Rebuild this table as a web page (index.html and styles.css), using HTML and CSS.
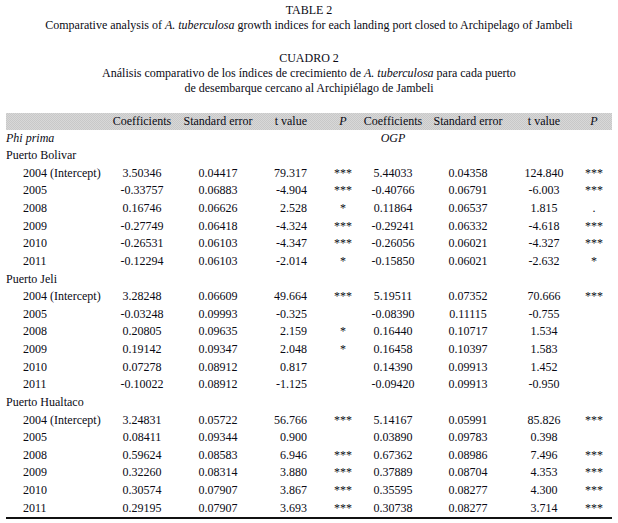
FILE: index.html
```html
<!DOCTYPE html>
<html>
<head>
<meta charset="utf-8">
<link rel="stylesheet" href="styles.css">
</head>
<body>
<div class="titles">
  <div class="title-block">
    <div>TABLE 2</div>
    <div>Comparative analysis of <i>A. tuberculosa</i> growth indices for each landing port closed to Archipelago of Jambeli</div>
  </div>
  <div class="title-block second">
    <div>CUADRO 2</div>
    <div>Análisis comparativo de los índices de crecimiento de <i>A. tuberculosa</i> para cada puerto</div>
    <div>de desembarque cercano al Archipiélago de Jambeli</div>
  </div>
</div>
<table class="data">
  <colgroup>
    <col class="c1"><col class="c2"><col class="c3"><col class="c4"><col class="c5"><col class="c6"><col class="c7"><col class="c8"><col class="c9">
  </colgroup>
  <thead>
    <tr class="head">
      <th></th><th class="ctr">Coefficients</th><th class="ctr">Standard error</th><th class="tl">t value</th><th class="pl"><i>P</i></th>
      <th class="ctr">Coefficients</th><th class="ctr">Standard error</th><th class="ctr">t value</th><th class="ctr"><i>P</i></th>
    </tr>
  </thead>
  <tbody>
    <tr><td class="sec"><i>Phi prima</i></td><td></td><td></td><td></td><td></td><td class="ctr"><i>OGP</i></td><td></td><td></td><td></td></tr>
    <tr><td class="sec">Puerto Bolivar</td><td></td><td></td><td></td><td></td><td></td><td></td><td></td><td></td></tr>
    <tr><td class="sub">2004 (Intercept)</td><td class="ctr">3.50346</td><td class="ctr">0.04417</td><td class="tl">79.317</td><td class="pl">***</td><td class="ctr">5.44033</td><td class="ctr">0.04358</td><td class="ctr">124.840</td><td class="ctr">***</td></tr>
    <tr><td class="sub">2005</td><td class="ctr">-0.33757</td><td class="ctr">0.06883</td><td class="tl">-4.904</td><td class="pl">***</td><td class="ctr">-0.40766</td><td class="ctr">0.06791</td><td class="ctr">-6.003</td><td class="ctr">***</td></tr>
    <tr><td class="sub">2008</td><td class="ctr">0.16746</td><td class="ctr">0.06626</td><td class="tl">2.528</td><td class="pl">*</td><td class="ctr">0.11864</td><td class="ctr">0.06537</td><td class="ctr">1.815</td><td class="ctr">.</td></tr>
    <tr><td class="sub">2009</td><td class="ctr">-0.27749</td><td class="ctr">0.06418</td><td class="tl">-4.324</td><td class="pl">***</td><td class="ctr">-0.29241</td><td class="ctr">0.06332</td><td class="ctr">-4.618</td><td class="ctr">***</td></tr>
    <tr><td class="sub">2010</td><td class="ctr">-0.26531</td><td class="ctr">0.06103</td><td class="tl">-4.347</td><td class="pl">***</td><td class="ctr">-0.26056</td><td class="ctr">0.06021</td><td class="ctr">-4.327</td><td class="ctr">***</td></tr>
    <tr><td class="sub">2011</td><td class="ctr">-0.12294</td><td class="ctr">0.06103</td><td class="tl">-2.014</td><td class="pl">*</td><td class="ctr">-0.15850</td><td class="ctr">0.06021</td><td class="ctr">-2.632</td><td class="ctr">*</td></tr>
    <tr><td class="sec">Puerto Jeli</td><td></td><td></td><td></td><td></td><td></td><td></td><td></td><td></td></tr>
    <tr><td class="sub">2004 (Intercept)</td><td class="ctr">3.28248</td><td class="ctr">0.06609</td><td class="tl">49.664</td><td class="pl">***</td><td class="ctr">5.19511</td><td class="ctr">0.07352</td><td class="ctr">70.666</td><td class="ctr">***</td></tr>
    <tr><td class="sub">2005</td><td class="ctr">-0.03248</td><td class="ctr">0.09993</td><td class="tl">-0.325</td><td class="pl"></td><td class="ctr">-0.08390</td><td class="ctr">0.11115</td><td class="ctr">-0.755</td><td class="ctr"></td></tr>
    <tr><td class="sub">2008</td><td class="ctr">0.20805</td><td class="ctr">0.09635</td><td class="tl">2.159</td><td class="pl">*</td><td class="ctr">0.16440</td><td class="ctr">0.10717</td><td class="ctr">1.534</td><td class="ctr"></td></tr>
    <tr><td class="sub">2009</td><td class="ctr">0.19142</td><td class="ctr">0.09347</td><td class="tl">2.048</td><td class="pl">*</td><td class="ctr">0.16458</td><td class="ctr">0.10397</td><td class="ctr">1.583</td><td class="ctr"></td></tr>
    <tr><td class="sub">2010</td><td class="ctr">0.07278</td><td class="ctr">0.08912</td><td class="tl">0.817</td><td class="pl"></td><td class="ctr">0.14390</td><td class="ctr">0.09913</td><td class="ctr">1.452</td><td class="ctr"></td></tr>
    <tr><td class="sub">2011</td><td class="ctr">-0.10022</td><td class="ctr">0.08912</td><td class="tl">-1.125</td><td class="pl"></td><td class="ctr">-0.09420</td><td class="ctr">0.09913</td><td class="ctr">-0.950</td><td class="ctr"></td></tr>
    <tr><td class="sec">Puerto Hualtaco</td><td></td><td></td><td></td><td></td><td></td><td></td><td></td><td></td></tr>
    <tr><td class="sub">2004 (Intercept)</td><td class="ctr">3.24831</td><td class="ctr">0.05722</td><td class="tl">56.766</td><td class="pl">***</td><td class="ctr">5.14167</td><td class="ctr">0.05991</td><td class="ctr">85.826</td><td class="ctr">***</td></tr>
    <tr><td class="sub">2005</td><td class="ctr">0.08411</td><td class="ctr">0.09344</td><td class="tl">0.900</td><td class="pl"></td><td class="ctr">0.03890</td><td class="ctr">0.09783</td><td class="ctr">0.398</td><td class="ctr"></td></tr>
    <tr><td class="sub">2008</td><td class="ctr">0.59624</td><td class="ctr">0.08583</td><td class="tl">6.946</td><td class="pl">***</td><td class="ctr">0.67362</td><td class="ctr">0.08986</td><td class="ctr">7.496</td><td class="ctr">***</td></tr>
    <tr><td class="sub">2009</td><td class="ctr">0.32260</td><td class="ctr">0.08314</td><td class="tl">3.880</td><td class="pl">***</td><td class="ctr">0.37889</td><td class="ctr">0.08704</td><td class="ctr">4.353</td><td class="ctr">***</td></tr>
    <tr><td class="sub">2010</td><td class="ctr">0.30574</td><td class="ctr">0.07907</td><td class="tl">3.867</td><td class="pl">***</td><td class="ctr">0.35595</td><td class="ctr">0.08277</td><td class="ctr">4.300</td><td class="ctr">***</td></tr>
    <tr class="last"><td class="sub">2011</td><td class="ctr">0.29195</td><td class="ctr">0.07907</td><td class="tl">3.693</td><td class="pl">***</td><td class="ctr">0.30738</td><td class="ctr">0.08277</td><td class="ctr">3.714</td><td class="ctr">***</td></tr>
  </tbody>
</table>
</body>
</html>
```
FILE: styles.css
```css
html, body {
  margin: 0;
  padding: 0;
  background: #ffffff;
}
body {
  font-family: "Liberation Serif", "Times New Roman", serif;
  font-size: 12px;
  color: #0a0a14;
}
.titles {
  width: 618px;
  text-align: center;
  padding-top: 2.5px;
}
.title-block {
  line-height: 15px;
}
.title-block.second {
  margin-top: 18px;
}
.data {
  margin: 17px 0 0 6px;
  width: 606px;
  table-layout: fixed;
  border-collapse: collapse;
  border-spacing: 0;
}
.c1 { width: 98px; }
.c2 { width: 76px; }
.c3 { width: 76px; }
.c4 { width: 54px; }
.c5 { width: 52px; }
.c6 { width: 62px; }
.c7 { width: 88px; }
.c8 { width: 64px; }
.c9 { width: 36px; }
.data th, .data td {
  padding: 0;
  white-space: nowrap;
  font-weight: normal;
  overflow: visible;
}
.head th {
  height: 17px;
  line-height: 17px;
  background-color: #d0d0d0;
  background-image: repeating-conic-gradient(#c8c8c8 0 25%, #d8d8d8 0 50%);
  background-size: 2px 2px;
}
.data td {
  height: 17.62px;
  line-height: 17.62px;
}
.ctr { text-align: center; }
.tl { text-align: right; padding-right: 3px !important; }
.pl { text-align: center; padding-left: 14px !important; }
.sec { text-align: left; }
.sub { text-align: left; padding-left: 17px !important; }
.last td {
  border-bottom: 2px solid #111;
}
```
